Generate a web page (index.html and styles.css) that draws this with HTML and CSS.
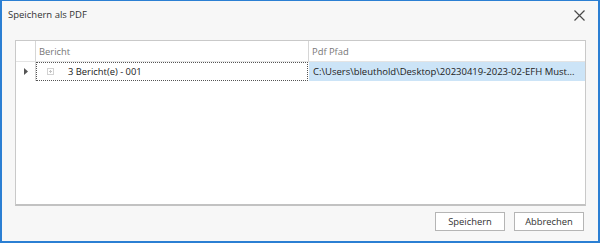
FILE: index.html
```html
<!DOCTYPE html>
<html lang="de">

<head>
  <meta charset="UTF-8" />
  <meta name="viewport" content="width=device-width, initial-scale=1.0" />
  <title>Speichern als PDF</title>
  <link rel="stylesheet" href="styles.css">
</head>

<body>
  <div class="window">
    <div class="title-bar">
      <span class="title">Speichern als PDF</span>
      <button class="close" aria-label="Schließen">
        <svg width="11" height="11" viewBox="0 0 11 11">
          <path d="M0.5 0.5 L10.5 10.5 M10.5 0.5 L0.5 10.5" stroke="#4a4a4a" stroke-width="1.2" fill="none" />
        </svg>
      </button>
    </div>

    <div class="grid">
      <div class="cell head indicator"></div>
      <div class="cell head">Bericht</div>
      <div class="cell head last">Pdf Pfad</div>

      <div class="cell row indicator">
        <svg width="4" height="7" viewBox="0 0 4 7">
          <path d="M0 0 L4 3.5 L0 7 Z" fill="#555" />
        </svg>
      </div>
      <div class="cell row focused">
        <span class="expand"></span>
        <span class="label">3 Bericht(e) - 001</span>
      </div>
      <div class="cell row last selected">C:\Users\bleuthold\Desktop\20230419-2023-02-EFH Must...</div>
    </div>

    <div class="footer">
      <button class="btn">Speichern</button>
      <button class="btn">Abbrechen</button>
    </div>
  </div>
</body>

</html>
```

FILE: styles.css
```css
* {
  box-sizing: border-box;
}

body {
  margin: 0;
  font-family: 'Open Sans', 'Noto Sans', sans-serif;
  font-size: 9.4px;
  color: #333;
  background: #fff;
}

.window {
  width: 600px;
  height: 243px;
  display: flex;
  flex-direction: column;
  background: #f7f7f7;
  border: 2px solid #2b7fd3;
  border-top-width: 1px;
}

.title-bar {
  height: 39px;
  display: flex;
  justify-content: space-between;
  align-items: flex-start;
  padding: 7px 13px 0 6px;
}

.title {
  font-size: 9.5px;
  color: #333;
}

.close {
  border: none;
  background: none;
  padding: 0;
  margin-top: 1px;
  width: 12px;
  height: 12px;
  display: flex;
  align-items: center;
  justify-content: center;
}

.grid {
  height: 166px;
  margin: 0 12px 0 13px;
  background: #fff;
  border: 1px solid #c9c9c9;
  border-bottom: 2px solid #c2c2c2;
  display: grid;
  grid-template-columns: 20px 273px 1fr;
  grid-template-rows: 21px 19px;
  align-content: start;
}

.cell {
  display: flex;
  align-items: center;
  white-space: nowrap;
  overflow: hidden;
}

.head {
  color: #777;
  padding-left: 3px;
  padding-top: 1px;
  border-right: 1px solid #d6d6d6;
  border-bottom: 1px solid #e4e4e4;
}

.head.last {
  border-right: none;
}

.indicator {
  justify-content: center;
  padding-left: 0;
  border-right: 1px solid #d6d6d6;
}

.row {
  color: #222;
}

.focused {
  border: 1px dotted #555;
  margin-right: 1px;
  padding-left: 10px;
}

.expand {
  width: 7px;
  height: 7px;
  border: 1px solid #d2d2d2;
  position: relative;
  margin-right: 14px;
}

.expand::before,
.expand::after {
  content: '';
  position: absolute;
  background: #c4c4c4;
}

.expand::before {
  left: 1px;
  top: 2px;
  width: 3px;
  height: 1px;
}

.expand::after {
  left: 2px;
  top: 1px;
  width: 1px;
  height: 3px;
}

.selected {
  background: #cce4f7;
  padding-left: 4px;
  font-size: 9.5px;
}

.footer {
  display: flex;
  justify-content: flex-end;
  gap: 9px;
  padding: 6px 14px 0 0;
}

.btn {
  width: 70px;
  height: 19px;
  font-family: inherit;
  font-size: 9.4px;
  color: #333;
  background: #fff;
  border: 1px solid #b5b5b5;
  padding: 0;
}
```
